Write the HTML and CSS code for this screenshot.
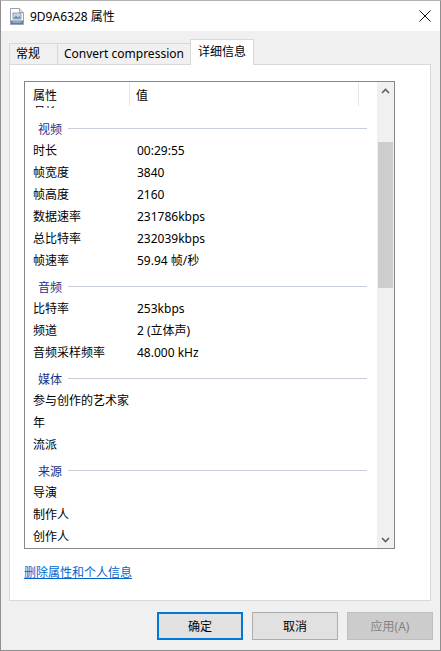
FILE: index.html
```html
<!DOCTYPE html>
<html lang="zh-CN">
<head>
    <meta charset="UTF-8">
    <title>9D9A6328 属性</title>
    <link rel="stylesheet" href="styles.css">
</head>
<body>
    <div class="window">
        <!-- Title bar -->
        <div class="titlebar">
            <svg class="file-icon" width="14" height="17" viewBox="0 0 14 17">
                <path d="M0.5 0.5 H9.5 L13.5 4.5 V16.5 H0.5 Z" fill="#fdfdfd" stroke="#9aa3ad"/>
                <path d="M9.5 0.5 V4.5 H13.5" fill="#e4e8ec" stroke="#9aa3ad"/>
                <rect x="3" y="5" width="8" height="6" fill="#c9d4de" stroke="#7d8a99" stroke-width="0.8"/>
                <path d="M3.5 10.5 L6 7.5 L8 9.5 L9.5 8 L10.5 10.5 Z" fill="#6f8aa6"/>
                <rect x="1" y="12.5" width="12" height="3.5" fill="#5b7fa6"/>
                <rect x="2.5" y="13.5" width="9" height="1" fill="#c3d3e4"/>
            </svg>
            <span class="title">9D9A6328 属性</span>
            <svg class="close" width="12" height="12" viewBox="0 0 12 12">
                <path d="M0.5 0.5 L11.5 11.5 M11.5 0.5 L0.5 11.5" stroke="#111" stroke-width="1"/>
            </svg>
        </div>

        <!-- Tabs -->
        <div class="tabs">
            <div class="tab">常规</div>
            <div class="tab">Convert compression</div>
            <div class="tab active">详细信息</div>
        </div>

        <div class="panel">
            <div class="listview">
                <div class="list-main">
                    <div class="list-header">
                        <div class="col col-name">属性</div>
                        <div class="col col-value">值</div>
                    </div>
                    <div class="list-body">
                        <div class="list-content">
                            <div class="row"><span class="name">名称</span><span class="value"></span></div>

                            <div class="group"><span>视频</span><i></i></div>
                            <div class="row"><span class="name">时长</span><span class="value">00:29:55</span></div>
                            <div class="row"><span class="name">帧宽度</span><span class="value">3840</span></div>
                            <div class="row"><span class="name">帧高度</span><span class="value">2160</span></div>
                            <div class="row"><span class="name">数据速率</span><span class="value">231786kbps</span></div>
                            <div class="row"><span class="name">总比特率</span><span class="value">232039kbps</span></div>
                            <div class="row"><span class="name">帧速率</span><span class="value">59.94 帧/秒</span></div>

                            <div class="group"><span>音频</span><i></i></div>
                            <div class="row"><span class="name">比特率</span><span class="value">253kbps</span></div>
                            <div class="row"><span class="name">频道</span><span class="value">2 (立体声)</span></div>
                            <div class="row"><span class="name">音频采样频率</span><span class="value">48.000 kHz</span></div>

                            <div class="group"><span>媒体</span><i></i></div>
                            <div class="row"><span class="name">参与创作的艺术家</span><span class="value"></span></div>
                            <div class="row"><span class="name">年</span><span class="value"></span></div>
                            <div class="row"><span class="name">流派</span><span class="value"></span></div>

                            <div class="group"><span>来源</span><i></i></div>
                            <div class="row"><span class="name">导演</span><span class="value"></span></div>
                            <div class="row"><span class="name">制作人</span><span class="value"></span></div>
                            <div class="row"><span class="name">创作人</span><span class="value"></span></div>
                        </div>
                    </div>
                </div>

                <!-- Vertical scrollbar -->
                <div class="scrollbar">
                    <div class="arrow">
                        <svg width="9" height="6" viewBox="0 0 9 6"><path d="M1 5 L4.5 1.5 L8 5" fill="none" stroke="#606060" stroke-width="1.6"/></svg>
                    </div>
                    <div class="track"><div class="thumb"></div></div>
                    <div class="arrow">
                        <svg width="9" height="6" viewBox="0 0 9 6"><path d="M1 1 L4.5 4.5 L8 1" fill="none" stroke="#606060" stroke-width="1.6"/></svg>
                    </div>
                </div>
            </div>

            <a class="remove-link" href="#">删除属性和个人信息</a>
        </div>

        <!-- Dialog buttons -->
        <div class="buttons">
            <button class="btn default">确定</button>
            <button class="btn">取消</button>
            <button class="btn" disabled>应用(A)</button>
        </div>
    </div>
</body>
</html>
```

FILE: styles.css
```css
/* General */
body {
    margin: 0;
    font-family: "Noto Sans", "Noto Sans CJK SC", sans-serif;
    font-size: 12px;
    color: #000;
    background: #f0f0f0;
}

.window {
    width: 441px;
    height: 651px;
    box-sizing: border-box;
    border: 1px solid #8f8f8f;
    border-top-color: #b5b5b5;
    background: #f0f0f0;
    overflow: hidden;
}

/* Title bar */
.titlebar {
    height: 30px;
    background: #fff;
    display: flex;
    align-items: center;
    padding-left: 9px;
    padding-right: 9px;
}

.file-icon {
    margin-top: 1px;
}

.title {
    margin-left: 6px;
    font-size: 12px;
    flex: 1;
}

/* Tabs */
.tabs {
    display: flex;
    align-items: flex-end;
    height: 24px;
    margin-top: 9px;
    padding-left: 8px;
    position: relative;
    z-index: 1;
}

.tab {
    height: 20px;
    line-height: 20px;
    padding: 0 6px;
    border: 1px solid #d9d9d9;
    border-bottom: none;
    background: #f0f0f0;
    margin-right: -1px;
}

.tab:first-child {
    width: 35px;
}

.tab.active {
    height: 25px;
    line-height: 23px;
    background: #fff;
    padding: 0 7px;
    margin-bottom: -1px;
    width: 48px;
}

/* Tab page */
.panel {
    margin-left: 8px;
    width: 422px;
    height: 537px;
    box-sizing: border-box;
    border: 1px solid #d9d9d9;
    background: #fff;
    padding: 16px 0 0 14px;
}

/* Details list */
.listview {
    width: 371px;
    height: 468px;
    box-sizing: border-box;
    border: 1px solid #828790;
    display: flex;
}

.list-main {
    flex: 1;
    display: flex;
    flex-direction: column;
    overflow: hidden;
}

.list-header {
    display: flex;
    height: 24px;
    flex-shrink: 0;
}

.col {
    height: 24px;
    padding-top: 3px;
    line-height: 21px;
    box-sizing: border-box;
}

.col-name {
    width: 105px;
    padding-left: 8px;
    border-right: 1px solid #e5e5e5;
}

.col-value {
    width: 229px;
    padding-left: 6px;
    border-right: 1px solid #e5e5e5;
}

.list-body {
    flex: 1;
    overflow: hidden;
}

.list-content {
    margin-top: -14px;
}

.row {
    display: flex;
    height: 22px;
    line-height: 22px;
    padding-left: 8px;
}

.row .name {
    width: 104px;
}

.group {
    display: flex;
    align-items: center;
    height: 23px;
    padding-top: 3px;
    padding-left: 13px;
    width: 329px;
    color: #1e3287;
}

.group i {
    flex: 1;
    height: 1px;
    margin-left: 6px;
    background: #c7cfdb;
}

/* Scrollbar */
.scrollbar {
    width: 17px;
    display: flex;
    flex-direction: column;
    background: #f0f0f0;
}

.arrow {
    height: 17px;
    display: flex;
    align-items: center;
    justify-content: center;
}

.track {
    flex: 1;
    padding-top: 43px;
}

.thumb {
    height: 146px;
    margin: 0 1px;
    background: #cdcdcd;
}

.remove-link {
    display: inline-block;
    margin-top: 16px;
    line-height: 16px;
    color: #0066cc;
    text-decoration: underline;
}

/* Buttons */
.buttons {
    display: flex;
    justify-content: flex-end;
    gap: 9px;
    margin-top: 11px;
    padding-right: 7px;
}

.btn {
    width: 86px;
    height: 28px;
    font-family: "Noto Sans", "Noto Sans CJK SC", sans-serif;
    font-size: 12px;
    color: #000;
    background: #e1e1e1;
    border: 1px solid #adadad;
    padding: 0;
}

.btn.default {
    border: 2px solid #0078d7;
}

.btn:disabled {
    background: #cccccc;
    border-color: #bfbfbf;
    color: #838383;
}
```
